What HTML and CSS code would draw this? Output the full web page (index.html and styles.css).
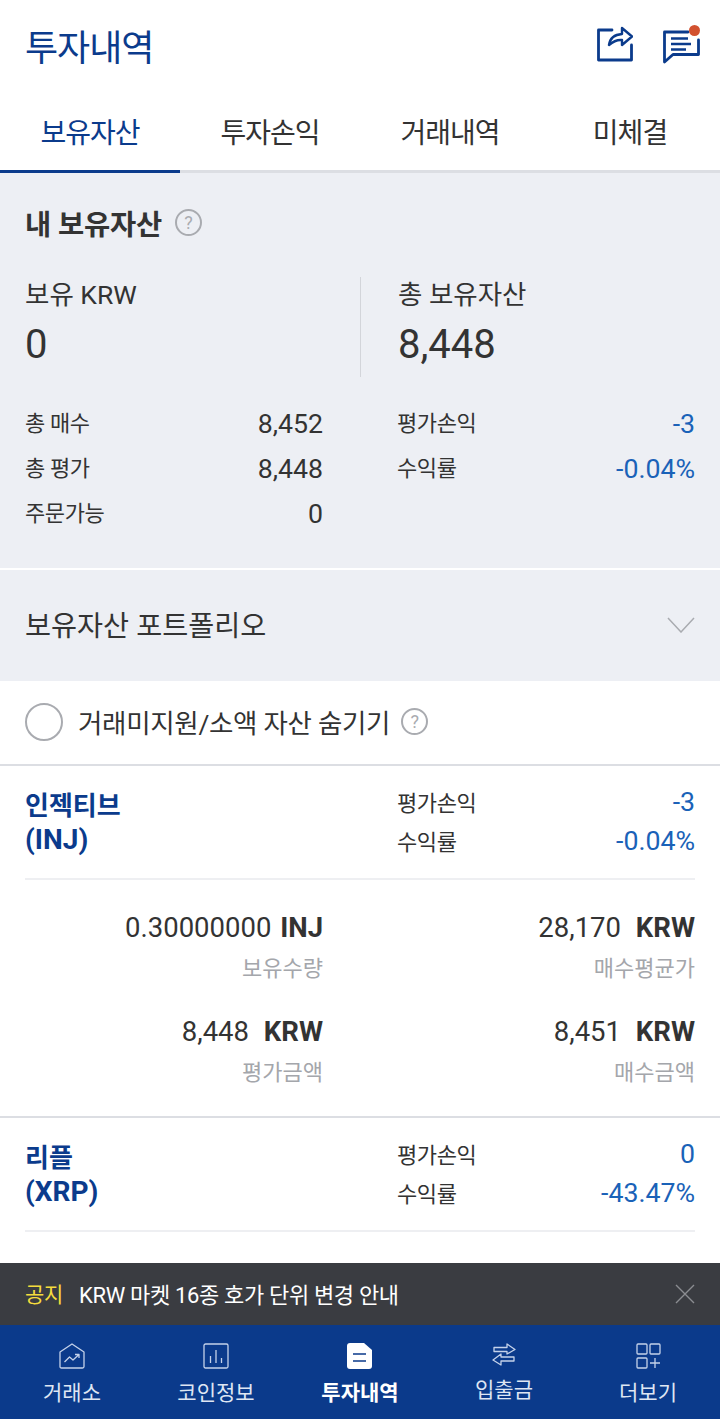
FILE: index.html
```html
<!DOCTYPE html>
<html lang="ko">
<head>
<meta charset="utf-8" />
<title>투자내역</title>
<link rel="stylesheet" href="styles.css">
</head>
<body>
<div class="page">
  <header class="top">
    <h1>투자내역</h1>
    <div class="top-icons">
      <svg width="36" height="36" viewBox="0 0 36 36" fill="none" stroke="#0b3b8c" stroke-width="2.800" stroke-linejoin="round" stroke-linecap="round">
        <path d="M15 4H1.500V34H34.500V19"/>
        <path d="M12 19C13 12 18 8.500 25 8V2L35 10.500L25 19V14C20 13.500 16 15.500 12 19Z" stroke-width="2.400"/>
      </svg>
      <span class="msg-icon">
        <svg width="37" height="34" viewBox="0 0 37 34" fill="none" stroke="#0b3b8c" stroke-width="2.800" stroke-linejoin="round" stroke-linecap="round">
          <path d="M25 2H1.500V32L10 24.500H35.500V10"/>
          <path d="M8 8.500H25M8 14H28M8 19.500H23" stroke-width="2.400" stroke-linecap="butt"/>
        </svg>
        <i class="dot"></i>
      </span>
    </div>
  </header>

  <nav class="tabs">
    <a class="tab on">보유자산</a>
    <a class="tab">투자손익</a>
    <a class="tab">거래내역</a>
    <a class="tab">미체결</a>
  </nav>

  <main class="content">
    <section class="summary">
      <h2>내 보유자산 <span class="help">?</span></h2>
      <div class="totals">
        <div class="total">
          <div class="total-label">보유 KRW</div>
          <div class="total-value">0</div>
        </div>
        <div class="total right">
          <div class="total-label">총 보유자산</div>
          <div class="total-value">8,448</div>
        </div>
      </div>
      <div class="stats">
        <dl class="stat-col">
          <div><dt>총 매수</dt><dd>8,452</dd></div>
          <div><dt>총 평가</dt><dd>8,448</dd></div>
          <div><dt>주문가능</dt><dd>0</dd></div>
        </dl>
        <dl class="stat-col">
          <div><dt>평가손익</dt><dd class="blue">-3</dd></div>
          <div><dt>수익률</dt><dd class="blue">-0.04%</dd></div>
        </dl>
      </div>
    </section>

    <section class="portfolio">
      <span>보유자산 포트폴리오</span>
      <svg width="28" height="16" viewBox="0 0 28 16" fill="none" stroke="#a9abb0" stroke-width="1.500"><path d="M1 1L14 15L27 1"/></svg>
    </section>

    <section class="filter">
      <i class="radio"></i>
      <span>거래미지원/소액 자산 숨기기</span>
      <span class="help">?</span>
    </section>

    <article class="coin">
      <div class="coin-head">
        <div class="coin-name">인젝티브<br><span>(INJ)</span></div>
        <dl class="coin-pl">
          <div><dt>평가손익</dt><dd class="blue">-3</dd></div>
          <div><dt>수익률</dt><dd class="blue">-0.04%</dd></div>
        </dl>
      </div>
      <div class="coin-grid">
        <div class="cell"><div class="amount">0.30000000 <b class="sym">INJ</b></div><div class="cap">보유수량</div></div>
        <div class="cell"><div class="amount">28,170 <b>KRW</b></div><div class="cap">매수평균가</div></div>
        <div class="cell"><div class="amount">8,448 <b>KRW</b></div><div class="cap">평가금액</div></div>
        <div class="cell"><div class="amount">8,451 <b>KRW</b></div><div class="cap">매수금액</div></div>
      </div>
    </article>

    <article class="coin">
      <div class="coin-head">
        <div class="coin-name">리플<br><span>(XRP)</span></div>
        <dl class="coin-pl">
          <div><dt>평가손익</dt><dd class="blue">0</dd></div>
          <div><dt>수익률</dt><dd class="blue">-43.47%</dd></div>
        </dl>
      </div>
    </article>
  </main>

  <div class="notice">
    <b>공지</b>
    <span>KRW 마켓 16종 호가 단위 변경 안내</span>
    <svg width="20" height="20" viewBox="0 0 20 20" fill="none" stroke="#8b8d91" stroke-width="1.400"><path d="M1 1L19 19M19 1L1 19"/></svg>
  </div>

  <nav class="bottom">
    <a class="item">
      <svg width="26" height="26" viewBox="0 0 26 26" fill="none" stroke="#c5d2ea" stroke-width="1.300" stroke-linejoin="round">
        <path d="M1 9L13 1L25 9V23.500Q25 25 23.500 25H2.500Q1 25 1 23.500Z"/>
        <path d="M5.500 19L10.500 14L14 17L20 11.500M16 11.500H20V15"/>
      </svg>
      거래소
    </a>
    <a class="item">
      <svg width="26" height="26" viewBox="0 0 26 26" fill="none" stroke="#c5d2ea" stroke-width="1.300" stroke-linejoin="round">
        <rect x="1" y="1" width="24" height="24" rx="1.500"/>
        <path d="M7.500 13V20M13 7V20M18.500 15V20"/>
      </svg>
      코인정보
    </a>
    <a class="item on">
      <svg width="26" height="26" viewBox="0 0 26 26">
        <path fill="#fff" d="M3 0H17L25 7V23Q25 26 22 26H3Q0 26 0 23V3Q0 0 3 0Z"/>
        <path stroke="#0b3a8b" stroke-width="1.600" d="M6 11H19M6 18H19"/>
      </svg>
      투자내역
    </a>
    <a class="item">
      <svg width="24" height="23" viewBox="0 0 24 23" fill="none" stroke="#c5d2ea" stroke-width="1.300" stroke-linejoin="round">
        <path d="M2 4.500H15V1L23 6.500L15 11V8.500H2Z"/>
        <path d="M22 14H9V11L1 17L9 22V18H22Z"/>
      </svg>
      입출금
    </a>
    <a class="item">
      <svg width="26" height="26" viewBox="0 0 26 26" fill="none" stroke="#c5d2ea" stroke-width="1.300">
        <rect x="2" y="1" width="10" height="10" rx="1"/>
        <rect x="15" y="1" width="10" height="10" rx="1"/>
        <rect x="2" y="15" width="10" height="10" rx="1"/>
        <path d="M15 20H25M20 15V25"/>
      </svg>
      더보기
    </a>
  </nav>
</div>
</body>
</html>
```

FILE: styles.css
```css
html, body {
  margin: 0;
  padding: 0;
}
body {
  font-family: Roboto, "Noto Sans CJK KR", sans-serif;
  color: #333;
  background: #fff;
}
.page {
  display: flex;
  flex-direction: column;
  width: 720px;
  height: 1419px;
  overflow: hidden;
}

.top {
  display: flex;
  align-items: center;
  justify-content: space-between;
  box-sizing: border-box;
  height: 92px;
  padding: 0 20px 3px 25px;
  flex: none;
}
.top h1 {
  margin: 0;
  font-size: 36px;
  font-weight: 400;
  color: #0b3b8c;
  letter-spacing: -1px;
}
.top-icons {
  display: flex;
  align-items: flex-start;
  gap: 30px;
  height: 37px;
}
.msg-icon {
  position: relative;
  display: block;
  height: 34px;
  margin-top: 4px;
}
.dot {
  position: absolute;
  top: -5px;
  right: 0;
  width: 11px;
  height: 11px;
  border-radius: 50%;
  background: #d2512f;
}

.tabs {
  display: flex;
  height: 78px;
  flex: none;
  border-bottom: 3px solid #dcdee3;
}
.tab {
  position: relative;
  flex: 1;
  height: 78px;
  text-align: center;
  font-size: 28px;
  line-height: 84px;
  letter-spacing: -1px;
  color: #333;
}
.tab.on {
  color: #0b3b8c;
}
.tab.on::after {
  content: "";
  position: absolute;
  left: 0;
  right: 0;
  bottom: -3px;
  height: 3px;
  background: #0b3b8c;
}

.content {
  flex: 1;
  overflow: hidden;
}

.summary {
  background: #edeff4;
  padding: 29px 25px 32px;
  border-bottom: 2px solid #fff;
}
.summary h2 {
  display: flex;
  align-items: center;
  gap: 13px;
  margin: 0;
  height: 40px;
  font-size: 28.500px;
  font-weight: 700;
  letter-spacing: -0.200px;
}
.help {
  display: inline-block;
  box-sizing: border-box;
  width: 27px;
  height: 27px;
  border: 2px solid #a9abb0;
  border-radius: 50%;
  text-align: center;
  font-size: 18px;
  line-height: 23px;
  font-weight: 400;
  letter-spacing: 0;
  color: #a9abb0;
}

.totals {
  display: flex;
  margin-top: 35px;
  height: 100px;
}
.total {
  width: 335px;
}
.total.right {
  flex: 1;
  padding-left: 37px;
  border-left: 1px solid #d3d5da;
}
.total-label {
  font-size: 26.500px;
  line-height: 36px;
}
.total-value {
  font-size: 40px;
  line-height: 64px;
}

.stats {
  display: flex;
  margin-top: 24px;
}
.stat-col {
  margin: 0;
  width: 298px;
}
.stat-col + .stat-col {
  flex: 1;
  margin-left: 74px;
}
.stat-col div {
  display: flex;
  justify-content: space-between;
  align-items: center;
  height: 45px;
}
.stat-col dt, .coin-pl dt {
  font-size: 22px;
  letter-spacing: -0.400px;
  padding-bottom: 6px;
}
.coin-pl dt {
  padding-bottom: 2px;
}
.stat-col dd, .coin-pl dd {
  margin: 0;
  font-size: 26.700px;
}
.blue {
  color: #1a62b8;
}

.portfolio {
  display: flex;
  align-items: flex-start;
  justify-content: space-between;
  height: 111px;
  box-sizing: border-box;
  padding: 35px 25px 0;
  background: #edeff4;
  font-size: 28.300px;
  line-height: 44px;
}
.portfolio svg {
  margin-top: 12px;
}

.filter {
  display: flex;
  align-items: center;
  height: 83px;
  padding: 0 25px 2px;
  box-sizing: border-box;
  font-size: 26.500px;
  letter-spacing: -0.300px;
}
.radio {
  width: 34px;
  height: 34px;
  border: 2px solid #a9abb0;
  border-radius: 50%;
  margin-right: 15px;
}
.filter .help {
  margin-left: 11px;
}

.coin {
  border-top: 2px solid #dcdee3;
  padding: 0 25px;
}
.coin-head {
  display: flex;
  height: 112px;
  border-bottom: 2px solid #eeeff2;
}
.coin-name {
  width: 372px;
  padding-top: 24px;
  font-size: 26px;
  line-height: 33px;
  font-weight: 700;
  color: #0b3b8c;
}
.coin-name span {
  font-size: 28px;
}
.coin-pl {
  flex: 1;
  margin: 0;
  padding-top: 16px;
}
.coin-pl div {
  display: flex;
  justify-content: space-between;
  align-items: center;
  height: 39px;
}

.coin-grid {
  display: grid;
  grid-template-columns: 298px 298px;
  column-gap: 74px;
  row-gap: 28px;
  padding: 28px 0 28px;
}
.cell {
  text-align: right;
}
.amount {
  font-size: 27.500px;
  line-height: 40px;
}
.amount b {
  margin-left: 8px;
  font-weight: 700;
}
.amount b.sym {
  margin-left: 2px;
}
.cap {
  margin-top: 6px;
  font-size: 22px;
  line-height: 30px;
  color: #a4a6ab;
}

.notice {
  display: flex;
  align-items: center;
  box-sizing: border-box;
  height: 62px;
  flex: none;
  padding: 0 25px 3px;
  background: #3a3c41;
  color: #fff;
  font-size: 22px;
  letter-spacing: -0.330px;
}
.notice b {
  font-size: 21px;
  font-weight: 400;
  color: #f5dc3d;
  margin-right: 16px;
}
.notice span {
  flex: 1;
}
.notice svg {
  margin-top: 3px;
}

.bottom {
  display: flex;
  height: 94px;
  flex: none;
  background: #0b3a8b;
}
.item {
  flex: 1;
  display: flex;
  flex-direction: column;
  align-items: center;
  padding-top: 18px;
  font-size: 21px;
  line-height: 36px;
  color: #dfe6f3;
}
.item svg {
  margin-bottom: 6px;
}
.item.on {
  color: #fff;
  font-weight: 700;
}
```
